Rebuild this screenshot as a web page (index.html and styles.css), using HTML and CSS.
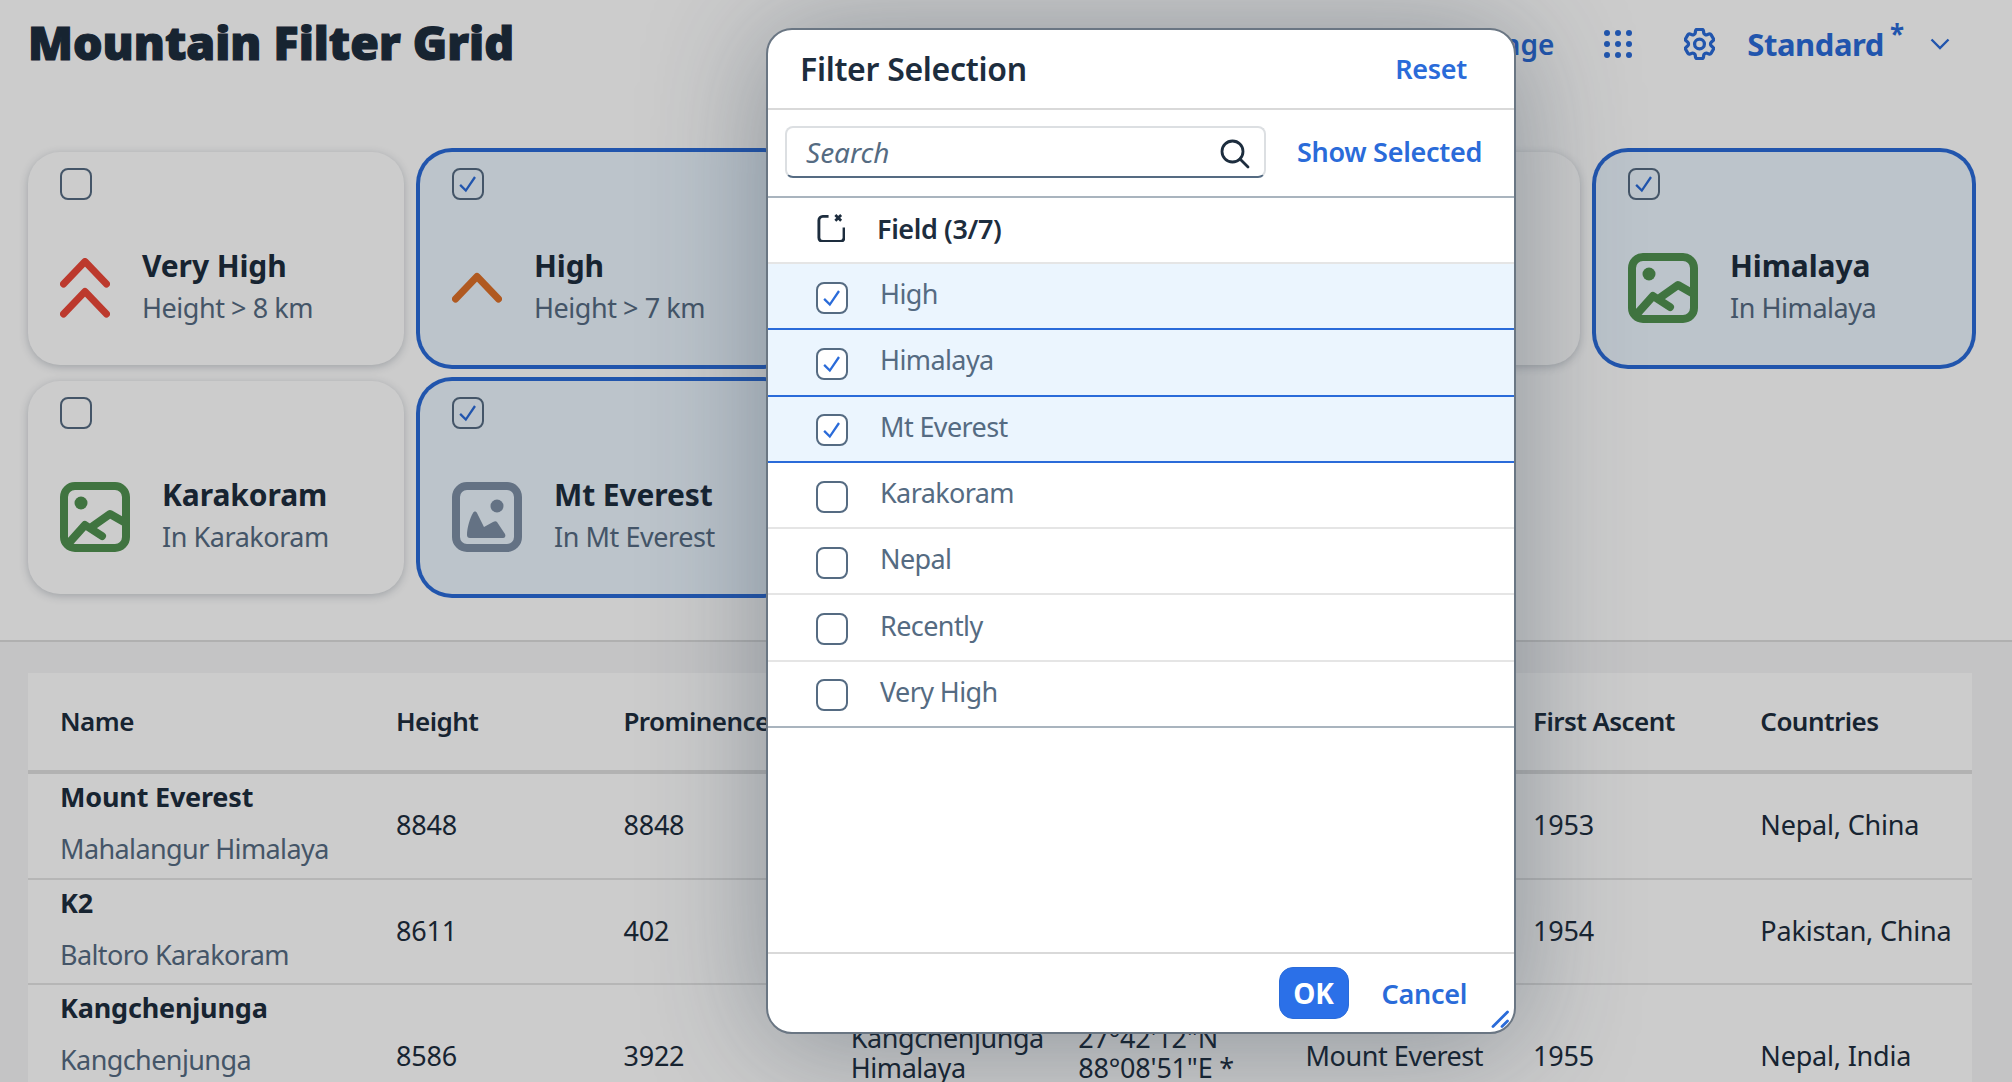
FILE: index.html
```html
<!DOCTYPE html>
<html lang="en">
<head>
<meta charset="utf-8">
<title>Mountain Filter Grid</title>
<link rel="stylesheet" href="styles.css">
</head>
<body>
<svg class="defs" width="0" height="0" aria-hidden="true">
  <defs>
    <symbol id="tick" viewBox="0 0 32 32"><path d="M7 17l6.5 6.5L24 8" fill="none" stroke="currentColor" stroke-width="2.6"/></symbol>
    <symbol id="img" viewBox="0 0 70 70">
      <rect x="4" y="4" width="62" height="62" rx="11" fill="none" stroke="currentColor" stroke-width="8"/>
      <circle cx="21" cy="21" r="6.5" fill="currentColor"/>
      <path d="M8 62L25 43l17 11M33 44l17-12 14 8" fill="none" stroke="currentColor" stroke-width="8" stroke-linecap="round" stroke-linejoin="round"/>
    </symbol>
    <symbol id="imgfill" viewBox="0 0 70 70">
      <rect x="4" y="4" width="62" height="62" rx="11" fill="none" stroke="currentColor" stroke-width="8"/>
      <circle cx="45" cy="24" r="6.5" fill="currentColor"/>
      <path d="M15 53c0-7 3-17 6-22 1-2 3-2 4 0l7 14 9-5c2-1 3-1 4 0l8 12c1 2 0 4-2 4H18c-2 0-3-1-3-3z" fill="currentColor"/>
    </symbol>
  </defs>
</svg>

<main class="page">
  <header class="top">
    <h1 class="title">Mountain Filter Grid</h1>
    <div class="actions">
      <span class="link">Change</span>
      <svg class="apps" viewBox="0 0 28 28"><g fill="currentColor"><circle cx="3" cy="3" r="3"/><circle cx="14" cy="3" r="3"/><circle cx="25" cy="3" r="3"/><circle cx="3" cy="14" r="3"/><circle cx="14" cy="14" r="3"/><circle cx="25" cy="14" r="3"/><circle cx="3" cy="25" r="3"/><circle cx="14" cy="25" r="3"/><circle cx="25" cy="25" r="3"/></g></svg>
      <svg class="gear" viewBox="2.6 2.2 18.8 19.6"><path fill="none" stroke="currentColor" stroke-width="2" d="M9.594 3.94c.09-.542.56-.94 1.11-.94h2.593c.55 0 1.02.398 1.11.94l.213 1.281c.063.374.313.686.645.87.074.04.147.083.22.127.325.196.72.257 1.075.124l1.217-.456a1.125 1.125 0 0 1 1.37.49l1.296 2.247a1.125 1.125 0 0 1-.26 1.431l-1.003.827c-.293.241-.438.613-.43.992a7.723 7.723 0 0 1 0 .255c-.008.378.137.75.43.991l1.004.827c.424.35.534.955.26 1.43l-1.298 2.247a1.125 1.125 0 0 1-1.369.491l-1.217-.456c-.355-.133-.75-.072-1.076.124a6.47 6.47 0 0 1-.22.128c-.331.183-.581.495-.644.869l-.213 1.281c-.09.543-.56.94-1.11.94h-2.594c-.55 0-1.019-.398-1.11-.94l-.213-1.281c-.062-.374-.312-.686-.644-.87a6.52 6.52 0 0 1-.22-.127c-.325-.196-.72-.257-1.076-.124l-1.217.456a1.125 1.125 0 0 1-1.369-.49l-1.297-2.247a1.125 1.125 0 0 1 .26-1.431l1.004-.827c.292-.24.437-.613.43-.991a6.932 6.932 0 0 1 0-.255c.007-.38-.138-.751-.43-.992l-1.004-.827a1.125 1.125 0 0 1-.26-1.43l1.297-2.247a1.125 1.125 0 0 1 1.37-.491l1.216.456c.356.133.751.072 1.076-.124.072-.044.146-.086.22-.128.332-.183.582-.495.644-.869l.214-1.28Z"/><path fill="none" stroke="currentColor" stroke-width="2" d="M15 12a3 3 0 1 1-6 0 3 3 0 0 1 6 0Z"/></svg>
      <span class="variant">Standard<sup class="star">*</sup></span>
      <svg class="caret" viewBox="0 0 20 12"><path d="M1.5 1.5L10 10l8.5-8.5" fill="none" stroke="currentColor" stroke-width="2.4"/></svg>
    </div>
  </header>

  <section class="cards">
    <article class="card">
      <span class="check"></span>
      <div class="card-body">
        <svg class="chev red" viewBox="0 0 50 60"><path d="M3.500 26L25 3.500 46.500 26M3.500 56L25 33.500 46.500 56" fill="none" stroke="currentColor" stroke-width="7" stroke-linecap="round" stroke-linejoin="round"/></svg>
        <div><div class="card-title">Very High</div><div class="card-sub">Height &gt; 8 km</div></div>
      </div>
    </article>
    <article class="card selected">
      <span class="check"><svg class="tick"><use href="#tick"/></svg></span>
      <div class="card-body">
        <svg class="chev orange" viewBox="0 0 50 60"><path d="M3.500 41L25 18.500 46.500 41" fill="none" stroke="currentColor" stroke-width="7" stroke-linecap="round" stroke-linejoin="round"/></svg>
        <div><div class="card-title">High</div><div class="card-sub">Height &gt; 7 km</div></div>
      </div>
    </article>
    <article class="card">
      <span class="check"></span>
      <div class="card-body">
        <svg class="pic green"><use href="#img"/></svg>
        <div><div class="card-title">Nepal</div><div class="card-sub">In Nepal</div></div>
      </div>
    </article>
    <article class="card">
      <span class="check"></span>
      <div class="card-body">
        <svg class="pic green"><use href="#img"/></svg>
        <div><div class="card-title">Recently</div><div class="card-sub">Climbed</div></div>
      </div>
    </article>
    <article class="card selected">
      <span class="check"><svg class="tick"><use href="#tick"/></svg></span>
      <div class="card-body">
        <svg class="pic green"><use href="#img"/></svg>
        <div><div class="card-title">Himalaya</div><div class="card-sub">In Himalaya</div></div>
      </div>
    </article>
    <article class="card">
      <span class="check"></span>
      <div class="card-body">
        <svg class="pic green"><use href="#img"/></svg>
        <div><div class="card-title">Karakoram</div><div class="card-sub">In Karakoram</div></div>
      </div>
    </article>
    <article class="card selected">
      <span class="check"><svg class="tick"><use href="#tick"/></svg></span>
      <div class="card-body">
        <svg class="pic grey"><use href="#imgfill"/></svg>
        <div><div class="card-title">Mt Everest</div><div class="card-sub">In Mt Everest</div></div>
      </div>
    </article>
  </section>

  <section class="content">
    <div class="table">
      <div class="row head">
        <div class="cell">Name</div><div class="cell">Height</div><div class="cell">Prominence</div><div class="cell">Range</div><div class="cell">Coordinates</div><div class="cell">Parent Mountain</div><div class="cell">First Ascent</div><div class="cell">Countries</div>
      </div>
      <div class="row">
        <div class="cell name"><div class="name-main">Mount Everest</div><div class="name-sub">Mahalangur Himalaya</div></div>
        <div class="cell">8848</div><div class="cell">8848</div><div class="cell wrap tight">Mahalangur Himalaya</div><div class="cell wrap">27°59'17"N 86°55'31"E</div><div class="cell"></div><div class="cell">1953</div><div class="cell">Nepal, China</div>
      </div>
      <div class="row">
        <div class="cell name"><div class="name-main">K2</div><div class="name-sub">Baltoro Karakoram</div></div>
        <div class="cell">8611</div><div class="cell">402</div><div class="cell wrap tight">Baltoro Karakoram</div><div class="cell wrap">35°52'53"N 76°30'48"E</div><div class="cell tight">Mount Everest</div><div class="cell">1954</div><div class="cell">Pakistan, China</div>
      </div>
      <div class="row tall">
        <div class="cell name"><div class="name-main">Kangchenjunga</div><div class="name-sub">Kangchenjunga</div></div>
        <div class="cell">8586</div><div class="cell">3922</div><div class="cell wrap tight">Kangchenjunga Himalaya</div><div class="cell wrap">27°42'12"N 88°08'51"E *</div><div class="cell tight">Mount Everest</div><div class="cell">1955</div><div class="cell">Nepal, India</div>
      </div>
    </div>
  </section>
</main>

<div class="overlay"></div>

<div class="dialog" role="dialog">
  <header class="dlg-head">
    <h2 class="dlg-title">Filter Selection</h2>
    <span class="dlg-link">Reset</span>
  </header>
  <div class="dlg-search">
    <div class="search">
      <span class="placeholder">Search</span>
      <svg class="glass" viewBox="0 0 30 30"><circle cx="12.500" cy="12.500" r="10.500" fill="none" stroke="currentColor" stroke-width="2.800"/><path d="M20 20l8 8" stroke="currentColor" stroke-width="2.800" stroke-linecap="round"/></svg>
    </div>
    <span class="dlg-link">Show Selected</span>
  </div>
  <div class="list">
    <div class="item item-head">
      <svg class="field-ico" viewBox="0 0 30 30"><path d="M13 3.500H7a4 4 0 0 0-4 4v18a4 4 0 0 0 4 4h18a4 4 0 0 0 4-4V15" fill="none" stroke="currentColor" stroke-width="3"/><path d="M20 2l6 6M26 2l-6 6" stroke="currentColor" stroke-width="2.800"/></svg>
      <span class="item-head-text">Field (3/7)</span>
    </div>
    <div class="item on"><span class="check blue"><svg class="tick"><use href="#tick"/></svg></span><span class="item-text">High</span></div>
    <div class="item on"><span class="check blue"><svg class="tick"><use href="#tick"/></svg></span><span class="item-text">Himalaya</span></div>
    <div class="item on"><span class="check blue"><svg class="tick"><use href="#tick"/></svg></span><span class="item-text">Mt Everest</span></div>
    <div class="item"><span class="check"></span><span class="item-text">Karakoram</span></div>
    <div class="item"><span class="check"></span><span class="item-text">Nepal</span></div>
    <div class="item"><span class="check"></span><span class="item-text">Recently</span></div>
    <div class="item last"><span class="check"></span><span class="item-text">Very High</span></div>
  </div>
  <footer class="dlg-foot">
    <button class="ok" type="button">OK</button>
    <span class="dlg-link">Cancel</span>
  </footer>
  <svg class="resize" viewBox="0 0 18 18"><path d="M2 16.500L16.500 2M11 16.500l5.500-5.500" stroke="currentColor" stroke-width="2.800" stroke-linecap="round" fill="none"/></svg>
</div>
</body>
</html>
```
FILE: styles.css
```css
* { box-sizing: border-box; }
html, body { margin: 0; height: 100%; }
body {
  width: 2012px;
  height: 1082px;
  overflow: hidden;
  position: relative;
  background: #fff;
  font-family: "Noto Sans", "Open Sans", sans-serif;
  color: #1d2d3e;
}
.defs { position: absolute; }
.page { height: 1082px; overflow: hidden; }

/* page header */
.top {
  height: 148px;
  padding: 0 62px 0 28px;
  display: flex;
  justify-content: space-between;
  align-items: flex-start;
}
.title {
  margin: 13px 0 0;
  font-size: 46.5px;
  line-height: 58px;
  font-weight: 900;
  -webkit-text-stroke: 1.2px #1d2d3e;
}
.actions {
  display: flex;
  align-items: center;
  height: 28px;
  margin-top: 30px;
  color: #2a6bd9;
}
.link { font-size: 28px; font-weight: 600; }
.apps { width: 28px; height: 28px; margin-left: 50px; }
.gear { width: 31px; height: 32px; margin-left: 52px; }
.variant { margin-left: 32px; font-size: 31px; font-weight: 700; position: relative; line-height: 40px; letter-spacing: -0.45px; margin-bottom: 1px; }
.star { position: absolute; left: 100%; top: -6px; margin-left: 6px; font-size: 26px; line-height: 32px; }
.caret { width: 20px; height: 12px; margin-left: 46px; }

/* filter cards */
.cards {
  padding: 4px 40px 0 28px;
  display: grid;
  grid-template-columns: repeat(5, 376px);
  grid-auto-rows: 213px;
  gap: 16px;
}
.card {
  background: #fff;
  border-radius: 32px;
  padding: 16px 32px 0;
  box-shadow: 0 2px 8px rgba(34, 53, 72, .25);
}
.card.selected {
  background: #ebf5fe;
  box-shadow: 0 0 0 4px #2a6bd9;
}
.check {
  display: block;
  width: 32px;
  height: 32px;
  border: 2px solid #556b82;
  border-radius: 8px;
  background: transparent;
  color: #2a6bd9;
  flex: none;
}
.check.blue { background: #fff; }
.tick { display: block; width: 28px; height: 28px; }
.card-body {
  display: flex;
  align-items: center;
  gap: 32px;
  margin-top: 50px;
  height: 76px;
}
.chev { width: 50px; height: 60px; flex: none; }
.pic { width: 70px; height: 70px; flex: none; }
.red { color: #ec4839; }
.orange { color: #dc7028; }
.green { color: #509250; }
.grey { color: #7d8fa5; }
.card-title { font-size: 30px; font-weight: 700; line-height: 40px; letter-spacing: -0.1px; margin-bottom: 1px; }
.card-sub { font-size: 27px; line-height: 42px; color: #556b82; letter-spacing: -0.45px; margin-bottom: 1px; }

/* table */
.content {
  margin-top: 46px;
  border-top: 2px solid #dcdcdc;
  background: #f5f6f7;
  padding: 31px 40px 0 28px;
  height: 450px;
}
.table { background: #fff; width: 1944px; }
.row {
  display: grid;
  grid-template-columns: 336px repeat(6, 227.4px) 1fr;
  height: 105.5px;
  border-bottom: 2px solid #e4e4e4;
  font-size: 27px;
  letter-spacing: -0.2px;
}
.row.head {
  height: 101px;
  border-bottom: 4px solid #dfdfdf;
  font-size: 26px;
  letter-spacing: -0.55px;
  font-weight: 600;
}
.row.tall { height: 142px; border-bottom: 0; }
.cell {
  padding: 0 8px 2px 32px;
  display: flex;
  align-items: center;
  min-width: 0;
  overflow: hidden;
}
.cell.wrap { line-height: 30px; padding-bottom: 6px; }
.cell.tight { letter-spacing: -0.45px; }
.cell.name { display: block; padding-top: 6px; padding-bottom: 0; }
.name-main { font-weight: 700; line-height: 34px; }
.name-sub { margin-top: 18px; line-height: 34px; color: #556b82; letter-spacing: -0.6px; }

/* dim layer */
.overlay {
  position: absolute;
  inset: 0;
  background: rgba(0, 0, 0, .2);
}

/* dialog */
.dialog {
  position: absolute;
  left: 766px;
  top: 28px;
  width: 750px;
  height: 1006px;
  background: #fff;
  border: 2px solid #6a7683;
  border-radius: 26px;
  box-shadow: 0 8px 120px rgba(34, 53, 72, .38);
  display: flex;
  flex-direction: column;
  overflow: hidden;
}
.dlg-head {
  height: 80px;
  flex: none;
  border-bottom: 2px solid #d9d9d9;
  padding: 0 47px 2px 32px;
  display: flex;
  align-items: center;
  justify-content: space-between;
}
.dlg-title { margin: 0; font-size: 32px; font-weight: 600; letter-spacing: -0.3px; }
.dlg-link { color: #2a6bd9; font-size: 27px; font-weight: 600; letter-spacing: -0.3px; }
.dlg-search {
  height: 88px;
  flex: none;
  border-bottom: 2px solid #a9b4be;
  padding: 0 32px 2px 17px;
  display: flex;
  align-items: center;
  justify-content: space-between;
}
.dlg-search .dlg-link { margin-bottom: 1px; }
.search {
  width: 481px;
  height: 52px;
  border: 2px solid #dcdfe2;
  border-bottom-color: #556b82;
  border-radius: 8px;
  padding: 0 14px 0 19px;
  display: flex;
  align-items: center;
  justify-content: space-between;
  color: #1d2d3e;
}
.placeholder { font-size: 28px; font-style: italic; color: #556b82; margin-bottom: 1px; }
.glass { width: 30px; height: 30px; margin-top: 3px; }
.list { flex: 1; min-height: 0; }
.item {
  height: 66.3px;
  padding-left: 48px;
  display: flex;
  align-items: center;
  gap: 32px;
  border-bottom: 2px solid #e5e5e5;
}
.item-head { height: 66px; }
.item.on { background: #ebf5fe; border-bottom-color: #2a6bd9; }
.item.last { border-bottom-color: #a9b4be; }
.item .check { width: 32px; height: 32px; margin-top: 3px; }
.field-ico { width: 29px; height: 29px; margin-bottom: 6px; flex: none; }
.item-head-text { font-size: 27px; font-weight: 600; letter-spacing: -0.4px; margin-bottom: 4px; }
.item-text { font-size: 27px; color: #556b82; letter-spacing: -0.6px; margin-bottom: 5px; }
.dlg-foot {
  height: 80px;
  flex: none;
  border-top: 2px solid #d9d9d9;
  padding: 0 47px 0 0;
  display: flex;
  align-items: center;
  justify-content: flex-end;
  gap: 33px;
}
.ok {
  width: 70px;
  height: 52px;
  border: 1px solid #2a6bd9;
  border-radius: 14px;
  background: #2b70e8;
  color: #fff;
  font: 700 28px "Noto Sans", sans-serif;
  padding: 0;
}
.resize {
  position: absolute;
  right: 5px;
  bottom: 4px;
  width: 18px;
  height: 18px;
  color: #2a6bd9;
}
```
